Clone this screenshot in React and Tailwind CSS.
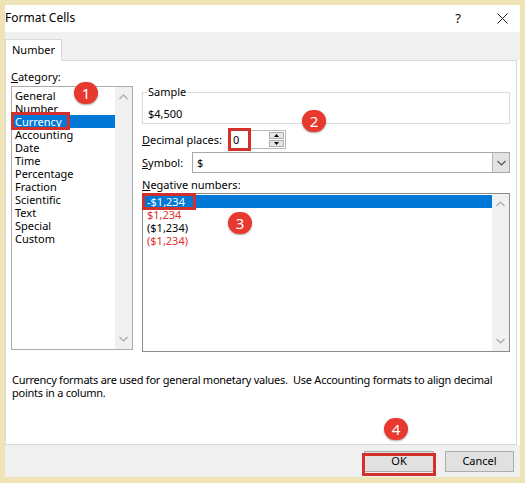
import React from "react";

const font = { fontFamily: '"Noto Sans", "Open Sans", sans-serif' };

function ChevronUp({ className = "" }) {
  return (
    <svg width="9" height="6" viewBox="0 0 9 6" className={className}>
      <path d="M0.5 5 L4.5 1 L8.5 5" fill="none" stroke="#a6a6a6" strokeWidth="1.2" />
    </svg>
  );
}
function ChevronDown({ className = "", color = "#a6a6a6" }) {
  return (
    <svg width="9" height="6" viewBox="0 0 9 6" className={className}>
      <path d="M0.5 1 L4.5 5 L8.5 1" fill="none" stroke={color} strokeWidth="1.2" />
    </svg>
  );
}

function Badge({ n, x, y }) {
  return (
    <div
      className="absolute w-[24px] h-[22px] rounded-full bg-[#e8392f] text-white flex items-center justify-center text-[15px] leading-none shadow-[0_1px_2px_rgba(0,0,0,0.35)]"
      style={{ left: x - 12, top: y - 11 }}
    >
      {n}
    </div>
  );
}

function Scrollbar() {
  return (
    <div className="w-[17px] self-stretch bg-[#f0f0f0] flex flex-col items-center justify-between py-[7px]">
      <ChevronUp />
      <ChevronDown />
    </div>
  );
}

export default function App() {
  const cats = [
    "General",
    "Number",
    "Currency",
    "Accounting",
    "Date",
    "Time",
    "Percentage",
    "Fraction",
    "Scientific",
    "Text",
    "Special",
    "Custom",
  ];
  return (
    <div
      className="relative w-[525px] h-[483px] bg-[#efe4b8] pt-[5px] pl-[5px] pr-[5px] pb-[6px] text-[11px] text-black"
      style={font}
    >
      <div className="flex flex-col h-full w-[515px] bg-white">
        {/* Title bar */}
        <div className="h-[27px] flex items-center justify-between">
          <span className="text-[12px] leading-none -mt-[2px]">Format Cells</span>
          <div className="flex items-center pr-[12px]">
            <span className="text-[13px] leading-none mr-[36px]">?</span>
            <svg width="11" height="11" viewBox="0 0 11 11">
              <path d="M0.5 0.5 L10.5 10.5 M10.5 0.5 L0.5 10.5" stroke="#222" strokeWidth="1" />
            </svg>
          </div>
        </div>
        {/* Tab strip */}
        <div className="h-[28px] bg-[#f0f0f0] flex items-end">
          <div className="w-[57px] h-[22px] bg-white border border-b-0 border-[#d9d9d9] flex items-center pl-[6px] -mb-[1px] relative z-10">
            Number
          </div>
        </div>
        {/* Content */}
        <div className="w-[512px] h-[385px] border border-[#d9d9d9] bg-white flex flex-col">
          <div className="flex pl-[5px] pt-[9px]">
            {/* Left column */}
            <div className="w-[122px] flex flex-col">
              <div className="leading-[13px]">
                <span className="underline">C</span>ategory:
              </div>
              <div className="mt-[3px] h-[264px] border border-[#acacac] flex">
                <div className="flex-1 flex flex-col pt-[2px]">
                  {cats.map((c) =>
                    c === "Currency" ? (
                      <div key={c} className="leading-[13px] bg-[#0078d7] text-white pl-[3px]">
                        {c}
                      </div>
                    ) : (
                      <div key={c} className="leading-[13px] pl-[3px]">
                        {c}
                      </div>
                    )
                  )}
                </div>
                <Scrollbar />
              </div>
            </div>
            {/* Right column */}
            <div className="ml-[9px] w-[368px] flex flex-col">
              <div className="relative mt-[22px] h-[32px] border border-[#dcdcdc]">
                <span className="absolute -top-[8px] left-[4px] bg-white px-[1px] leading-[13px]">
                  Sample
                </span>
                <div className="pt-[14px] pl-[5px] leading-[13px]">$4,500</div>
              </div>
              <div className="mt-[6px] flex items-center h-[19px]">
                <span className="w-[86px] leading-[13px]">
                  <span className="underline">D</span>ecimal places:
                </span>
                <div className="w-[58px] h-[19px] border border-[#b9b9b9] flex items-center justify-between pl-[4px] pr-[1px]">
                  <span className="leading-[13px]">0</span>
                  <div className="flex flex-col gap-[1px]">
                    <div className="w-[15px] h-[7px] bg-[#e5e5e5] border border-[#adadad] flex items-center justify-center">
                      <svg width="5" height="3" viewBox="0 0 5 3">
                        <path d="M0 3 L2.5 0 L5 3Z" fill="#000" />
                      </svg>
                    </div>
                    <div className="w-[15px] h-[7px] bg-[#e5e5e5] border border-[#adadad] flex items-center justify-center">
                      <svg width="5" height="3" viewBox="0 0 5 3">
                        <path d="M0 0 L2.5 3 L5 0Z" fill="#000" />
                      </svg>
                    </div>
                  </div>
                </div>
              </div>
              <div className="mt-[3px] flex items-center h-[21px]">
                <span className="w-[50px] leading-[13px]">
                  <span className="underline">S</span>ymbol:
                </span>
                <div className="flex-1 h-[21px] border border-[#a8a8a8] flex items-center">
                  <span className="flex-1 pl-[4px] leading-[13px]">$</span>
                  <div className="w-[17px] h-full bg-[#e3e3e3] border-l border-[#b5b5b5] flex items-center justify-center">
                    <ChevronDown color="#555" />
                  </div>
                </div>
              </div>
              <div className="mt-[5px] leading-[13px]">
                <span className="underline">N</span>egative numbers:
              </div>
              <div className="mt-[2px] h-[159px] border border-[#8c8c8c] flex">
                <div className="flex-1 flex flex-col pt-[1px]">
                  <div className="leading-[13px] bg-[#0078d7] text-white pl-[4px]">-$1,234</div>
                  <div className="leading-[13px] text-[#e0312b] pl-[4px]">$1,234</div>
                  <div className="leading-[13px] pl-[4px]">($1,234)</div>
                  <div className="leading-[13px] text-[#e0312b] pl-[4px]">($1,234)</div>
                </div>
                <Scrollbar />
              </div>
            </div>
          </div>
          <div className="mt-[21px] pl-[6px] leading-[13px] whitespace-nowrap tracking-[-0.25px]">
            Currency formats are used for general monetary values.&nbsp; Use Accounting formats to align decimal
            <br />
            points in a column.
          </div>
        </div>
        {/* Bottom bar */}
        <div className="flex-1 bg-[#f0f0f0] flex items-center justify-end pr-[6px] gap-[11px]">
          <div className="w-[70px] h-[21px] bg-[#e1e1e1] border border-[#adadad] flex items-center justify-center">
            OK
          </div>
          <div className="w-[69px] h-[21px] bg-[#e1e1e1] border border-[#adadad] flex items-center justify-center">
            Cancel
          </div>
        </div>
      </div>

      {/* Highlight boxes */}
      <div className="absolute left-[11px] top-[112px] w-[59px] h-[18px] border-[3px] border-[#d3302b]" />
      <div className="absolute left-[228px] top-[128px] w-[23px] h-[23px] border-[3px] border-[#d3302b]" />
      <div className="absolute left-[142px] top-[193px] w-[54px] h-[17px] border-[3px] border-[#d3302b]" />
      <div className="absolute left-[362px] top-[453px] w-[74px] h-[23px] border-[3px] border-[#d3302b]" />

      <Badge n="1" x={86} y={93} />
      <Badge n="2" x={314} y={121} />
      <Badge n="3" x={240} y={223} />
      <Badge n="4" x={396} y={429} />
    </div>
  );
}
